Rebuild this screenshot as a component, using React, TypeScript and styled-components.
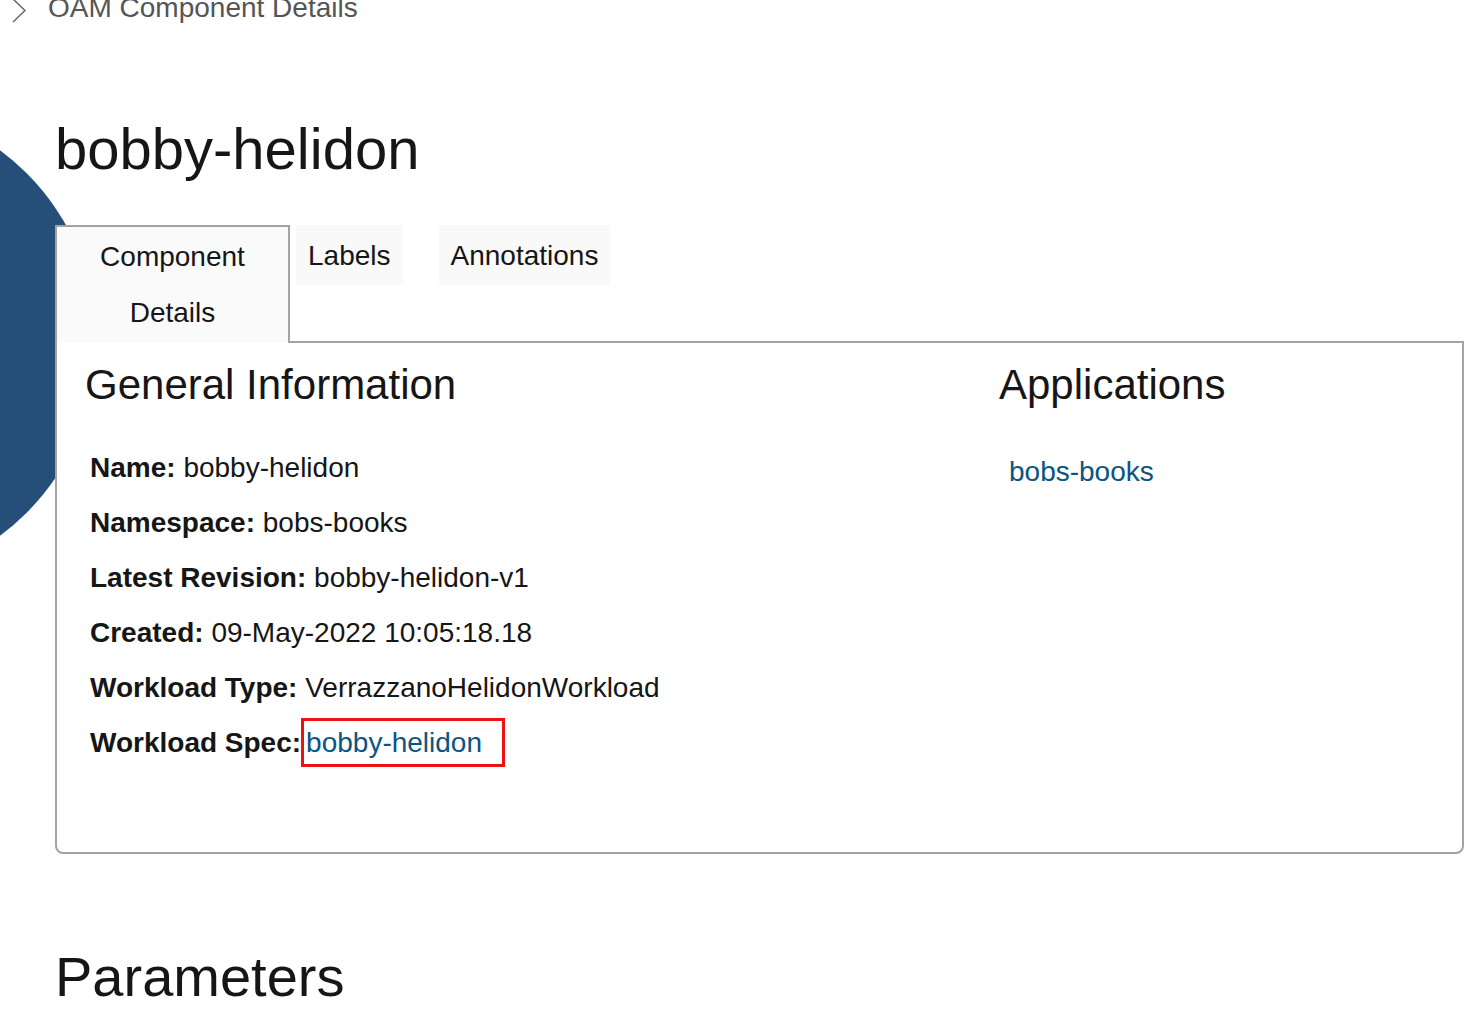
import React from 'react';
import styled, { createGlobalStyle } from 'styled-components';

const GlobalStyle = createGlobalStyle`
  html, body {
    margin: 0;
    padding: 0;
    background: #ffffff;
  }
  body {
    font-family: "Liberation Sans", Arial, Helvetica, sans-serif;
    color: #161616;
  }
`;

const Page = styled.div`
  position: relative;
  min-height: 1012px;
  overflow: hidden;
`;

// decorative blue disc peeking out from behind the tabs and the panel
const Backdrop = styled.div`
  position: absolute;
  left: -383px;
  top: 103px;
  width: 480px;
  height: 480px;
  border-radius: 50%;
  background: #254f79;
  z-index: 0;
`;

const Breadcrumb = styled.nav`
  position: relative;
  z-index: 1;
  display: flex;
  align-items: flex-start;
  gap: 22px;
  padding-left: 12px;
  height: 16px;
  font-size: 28px;
  line-height: 16px;
  color: #555555;

  svg {
    margin: -2px 0 -8px;
    flex: none;
  }
`;

const Content = styled.div`
  position: relative;
  z-index: 1;
  padding: 0 12px 0 55px;
`;

const Title = styled.h1`
  margin: 101px 0 0;
  font-size: 58px;
  line-height: 64px;
  font-weight: normal;
  color: #161616;
`;

const TabRow = styled.div`
  display: flex;
  align-items: flex-start;
  margin-top: 44px;
  position: relative;
  z-index: 2;
`;

const Tab = styled.div<{ $active?: boolean; $gap?: number }>`
  box-sizing: border-box;
  margin-left: ${(p) => p.$gap ?? 0}px;
  font-size: 28px;
  line-height: 56px;
  text-align: center;
  color: #161616;
  cursor: pointer;
  ${(p) =>
    p.$active
      ? `
    width: 235px;
    height: 118px;
    padding: 2px 0;
    margin-bottom: -2px;
    background: #fafafa;
    border: 2px solid #a3a3a3;
    border-bottom: none;
  `
      : `
    height: 60px;
    padding: 3px 12px 0;
    background: #f9f9f9;
  `}
`;

const Panel = styled.section`
  position: relative;
  z-index: 1;
  display: grid;
  grid-template-columns: 914px 1fr;
  padding: 18px 27px 82px 28px;
  background: #ffffff;
  border: 2px solid #a3a3a3;
  border-radius: 0 0 8px 8px;
`;

const SectionTitle = styled.h2`
  margin: 0;
  font-size: 42px;
  line-height: 48px;
  font-weight: normal;
  color: #161616;
`;

const InfoList = styled.div`
  margin-top: 31px;
  padding-left: 5px;
  font-size: 28px;
  line-height: 55px;
`;

const InfoRow = styled.div`
  white-space: nowrap;
`;

const Label = styled.strong`
  font-weight: bold;
`;

const Link = styled.a`
  color: #0a5583;
  text-decoration: none;
  cursor: pointer;
`;

const SpecLink = styled(Link)`
  display: inline-block;
  line-height: 43px;
  padding: 0 20px 0 2px;
  border: 3px solid #ee1111;
`;

const AppList = styled.div`
  margin-top: 35px;
  padding-left: 10px;
  font-size: 28px;
  line-height: 55px;
`;

const Parameters = styled.h2`
  margin: 92px 0 0;
  font-size: 56px;
  line-height: 62px;
  font-weight: normal;
  color: #161616;
`;

const rows: [string, string][] = [
  ['Name:', 'bobby-helidon'],
  ['Namespace:', 'bobs-books'],
  ['Latest Revision:', 'bobby-helidon-v1'],
  ['Created:', '09-May-2022 10:05:18.18'],
  ['Workload Type:', 'VerrazzanoHelidonWorkload'],
];

const App: React.FC = () => {
  return (
    <Page>
      <GlobalStyle />
      <Backdrop />
      <Breadcrumb>
        <svg width="14" height="26" viewBox="0 0 14 26">
          <polyline points="1,1 13,12.5 1,24" fill="none" stroke="#666666" strokeWidth="1.5" />
        </svg>
        <span>OAM Component Details</span>
      </Breadcrumb>

      <Content>
        <Title>bobby-helidon</Title>

        <TabRow>
          <Tab $active>Component Details</Tab>
          <Tab $gap={6}>Labels</Tab>
          <Tab $gap={36}>Annotations</Tab>
        </TabRow>

        <Panel>
          <div>
            <SectionTitle>General Information</SectionTitle>
            <InfoList>
              {rows.map(([label, value]) => (
                <InfoRow key={label}>
                  <Label>{label}</Label> {value}
                </InfoRow>
              ))}
              <InfoRow>
                <Label>Workload Spec:</Label>
                <SpecLink>bobby-helidon</SpecLink>
              </InfoRow>
            </InfoList>
          </div>
          <div>
            <SectionTitle>Applications</SectionTitle>
            <AppList>
              <Link>bobs-books</Link>
            </AppList>
          </div>
        </Panel>

        <Parameters>Parameters</Parameters>
      </Content>
    </Page>
  );
};

export default App;
